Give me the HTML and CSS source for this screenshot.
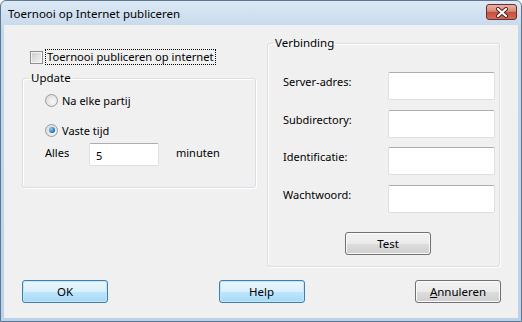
FILE: index.html
```html
<!DOCTYPE html>
<html>

<head>
    <link rel="stylesheet" href="styles.css">
</head>

<body>
    <div class="window">
        <div class="titlebar">
            <span class="title">Toernooi op Internet publiceren</span>
            <span class="close-btn">
                <svg width="14" height="11" viewBox="0 0 14 11">
                    <path d="M3 2 L11 9 M11 2 L3 9" stroke="#4a1f1f" stroke-width="4" stroke-linecap="round" />
                    <path d="M3 2 L11 9 M11 2 L3 9" stroke="#fff" stroke-width="2.2" stroke-linecap="round" />
                </svg>
            </span>
        </div>

        <div class="client">
            <div class="panes">
                <!-- left side: publish checkbox and update interval -->
                <div class="left-pane">
                    <label class="check-row">
                        <span class="checkbox"></span>
                        <span class="focus-text">Toernooi publiceren op internet</span>
                    </label>

                    <fieldset class="group update-group">
                        <legend>Update</legend>
                        <label class="radio-row">
                            <span class="radio"></span>Na elke partij
                        </label>
                        <label class="radio-row">
                            <span class="radio checked"></span>Vaste tijd
                        </label>
                        <div class="interval-row">
                            <span class="interval-label">Alles</span>
                            <span class="textbox interval-box">5</span>
                            <span>minuten</span>
                        </div>
                    </fieldset>
                </div>

                <!-- right side: connection settings -->
                <fieldset class="group connection-group">
                    <legend>Verbinding</legend>
                    <div class="field-row">
                        <span class="field-label">Server-adres:</span>
                        <span class="textbox field-box"></span>
                    </div>
                    <div class="field-row">
                        <span class="field-label">Subdirectory:</span>
                        <span class="textbox field-box"></span>
                    </div>
                    <div class="field-row">
                        <span class="field-label">Identificatie:</span>
                        <span class="textbox field-box"></span>
                    </div>
                    <div class="field-row">
                        <span class="field-label">Wachtwoord:</span>
                        <span class="textbox field-box"></span>
                    </div>
                    <div class="test-row">
                        <button type="button" class="btn">Test</button>
                    </div>
                </fieldset>
            </div>

            <div class="button-row">
                <button type="button" class="btn btn-default">OK</button>
                <button type="button" class="btn btn-default">Help</button>
                <button type="button" class="btn"><u>A</u>nnuleren</button>
            </div>
        </div>
    </div>
</body>

</html>
```

FILE: styles.css
```css
/* Dialog window frame */
body {
    margin: 0;
    font-family: 'Noto Sans', sans-serif;
    font-size: 11px;
    color: #000;
    background-color: #fff;
}

.window {
    width: 522px;
    height: 322px;
    box-sizing: border-box;
    border: 1px solid #5d7791;
    border-radius: 6px 6px 0 0;
    background: linear-gradient(#dde9f5, #c3d7ec 30px, #bcd2ea);
    padding: 0 3px 3px 3px;
    display: flex;
    flex-direction: column;
}

.titlebar {
    height: 24px;
    display: flex;
    align-items: center;
    justify-content: space-between;
    padding-left: 4px;
    padding-right: 1px;
}

.title {
    font-size: 11.5px;
    color: #000;
    margin-top: 1px;
}

.close-btn {
    width: 29px;
    height: 14px;
    border: 1px solid #6b2c2c;
    border-radius: 3px;
    background: linear-gradient(#eab1a5 0%, #d98a78 45%, #c5503f 52%, #cf6c55 100%);
    display: flex;
    align-items: center;
    justify-content: center;
    margin-top: -2px;
}

.client {
    flex: 1;
    background-color: #f0f0f0;
    display: flex;
    flex-direction: column;
}

.panes {
    display: flex;
    padding: 10px 0 0 18px;
    gap: 11px;
}

.left-pane {
    width: 234px;
    display: flex;
    flex-direction: column;
}

/* Group boxes */
.group {
    margin: 0;
    border: 1px solid #d5dfe5;
    border-radius: 3px;
    box-shadow: inset 1px 1px 0 #fff, 1px 1px 0 #fff;
    min-width: 0;
}

.group legend {
    padding: 0 2px;
    line-height: 16px;
    font-size: 11.5px;
}

/* Checkbox row */
.check-row {
    display: flex;
    align-items: center;
    margin-top: 14px;
    margin-left: 8px;
    height: 16px;
}

.checkbox {
    width: 11px;
    height: 11px;
    border: 1px solid #8f8f8f;
    background: linear-gradient(135deg, #cbcbcb, #f6f6f6);
    box-shadow: inset 0 0 0 1px #f4f4f4;
    margin-right: 2px;
}

.focus-text {
    border: 1px dotted #000;
    padding: 0 1px;
    line-height: 14px;
    font-size: 11.2px;
}

/* Update group */
.update-group {
    margin-top: 5px;
    height: 118px;
    box-sizing: border-box;
    padding: 0 0 0 22px;
}

.update-group legend {
    margin-left: -16px;
}

.radio-row {
    display: flex;
    align-items: center;
    height: 16px;
    margin-top: 6px;
}

.radio-row + .radio-row {
    margin-top: 14px;
}

.radio {
    width: 11px;
    height: 11px;
    border: 1px solid #9a9a9a;
    border-radius: 50%;
    background: radial-gradient(circle at 60% 60%, #f8f8f8, #d5d5d5);
    margin-right: 4px;
    display: flex;
    align-items: center;
    justify-content: center;
}

.radio.checked::after {
    content: "";
    width: 6px;
    height: 6px;
    border-radius: 50%;
    background: radial-gradient(circle at 35% 35%, #8fd2f8, #1b6bb1 70%, #134d85);
}

.interval-row {
    display: flex;
    align-items: center;
    margin-top: 5px;
}

.interval-label {
    width: 44px;
    margin-top: -4px;
}

.textbox {
    display: block;
    box-sizing: border-box;
    background-color: #fff;
    border: 1px solid #dbdfe6;
    border-top-color: #abadb3;
    border-radius: 2px;
}

.interval-box {
    width: 70px;
    height: 23px;
    padding: 4px 0 0 6px;
    margin-right: 17px;
}

.interval-row span:last-child {
    margin-top: -4px;
}

/* Connection group */
.connection-group {
    width: 233px;
    height: 232px;
    box-sizing: border-box;
    padding: 21px 4px 0 15px;
}

.connection-group legend {
    margin-left: -10px;
}

.field-row {
    display: flex;
    align-items: center;
    justify-content: space-between;
    height: 28px;
    margin-bottom: 9.5px;
}

.field-label {
    margin-top: -9px;
}

.field-box {
    width: 107px;
    height: 28px;
}

.test-row {
    display: flex;
    padding-left: 62px;
    margin-top: 19px;
}

/* Push buttons */
.btn {
    width: 86px;
    height: 23px;
    font-family: 'Noto Sans', sans-serif;
    font-size: 11.5px;
    color: #000;
    border: 1px solid #707070;
    border-radius: 3px;
    background: linear-gradient(#f2f2f2 0%, #ebebeb 50%, #dddddd 51%, #cfcfcf 100%);
    box-shadow: inset 0 0 0 1px #fbfbfb;
    padding: 0;
    cursor: pointer;
}

.btn u {
    text-decoration: underline;
}

.btn-default {
    border-color: #3c7fb1;
    background: linear-gradient(#eaf6fd 0%, #d9f0fc 50%, #bee6fd 51%, #a7d9f5 100%);
    box-shadow: inset 0 0 0 1px #c4e5f6;
}

.button-row {
    display: flex;
    justify-content: space-between;
    padding: 0 17px 0 18px;
    margin-top: 13px;
}
```
